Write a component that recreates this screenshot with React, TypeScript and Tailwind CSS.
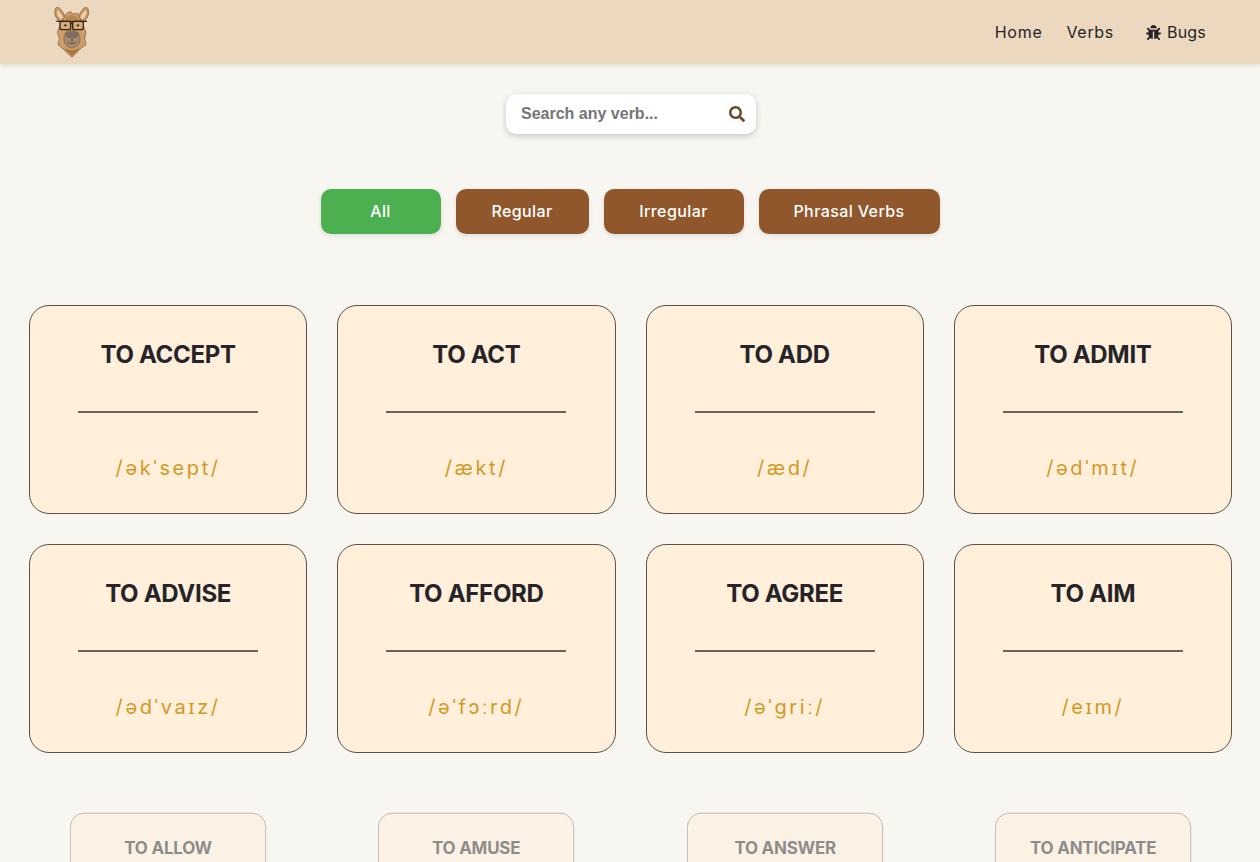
import React from 'react';
import { FaBug, FaSearch } from 'react-icons/fa';

const filters = [
  { label: 'All', width: 'w-[120px]', color: 'bg-[#4caf50]' },
  { label: 'Regular', width: 'w-[133px]', color: 'bg-[#8f572b]' },
  { label: 'Irregular', width: 'w-[140px]', color: 'bg-[#8f572b]' },
  { label: 'Phrasal Verbs', width: 'w-[181px]', color: 'bg-[#8f572b]' },
];

const verbs = [
  { name: 'TO ACCEPT', ipa: '/əkˈsept/' },
  { name: 'TO ACT', ipa: '/ækt/' },
  { name: 'TO ADD', ipa: '/æd/' },
  { name: 'TO ADMIT', ipa: '/ədˈmɪt/' },
  { name: 'TO ADVISE', ipa: '/ədˈvaɪz/' },
  { name: 'TO AFFORD', ipa: '/əˈfɔːrd/' },
  { name: 'TO AGREE', ipa: '/əˈgriː/' },
  { name: 'TO AIM', ipa: '/eɪm/' },
];

const fadedVerbs = [
  { name: 'TO ALLOW', ipa: '/əˈlaʊ/' },
  { name: 'TO AMUSE', ipa: '/əˈmjuːz/' },
  { name: 'TO ANSWER', ipa: '/ˈænsər/' },
  { name: 'TO ANTICIPATE', ipa: '/ænˈtɪsɪpeɪt/' },
];

function Logo() {
  return (
    <svg viewBox="69 18 111 156" className="w-[37px] h-[52px]">
      {/* ears */}
      <path d="M96 66 C80 62 70 44 76 26 C78 20 88 22 92 28 C100 38 106 48 106 58 Z" fill="#c9985f" stroke="#7a5a40" strokeWidth="2" />
      <path d="M92 58 C84 50 79 40 82 30 C90 36 97 46 99 54 Z" fill="#edd2b4" />
      <path d="M154 66 C170 62 180 44 174 26 C172 20 162 22 158 28 C150 38 144 48 144 58 Z" fill="#c9985f" stroke="#7a5a40" strokeWidth="2" />
      <path d="M158 58 C166 50 171 40 168 30 C160 36 153 46 151 54 Z" fill="#edd2b4" />
      {/* head and fur */}
      <path d="M98 60 L110 40 L122 34 L128 42 L142 40 L152 60 L168 96 L164 116 L168 134 L152 146 L126 172 L100 148 L84 134 L88 116 L82 96 Z" fill="#cf9d66" stroke="#7a5a40" strokeWidth="2" strokeLinejoin="round" />
      <path d="M102 144 L126 152 L150 144 L126 168 Z" fill="#a8743f" />
      <path d="M110 50 L124 44 L140 50 L146 60 L104 60 Z" fill="#b98650" />
      {/* muzzle */}
      <path d="M104 104 C104 88 146 88 148 104 C154 122 148 142 126 144 C104 142 98 122 104 104 Z" fill="#a58a70" stroke="#6b5240" strokeWidth="1.5" />
      <path d="M106 100 C110 92 142 92 146 100 C148 110 136 116 126 116 C116 116 104 110 106 100 Z" fill="#7f6a5c" />
      <path d="M126 116 L126 126 M114 126 C120 132 132 132 138 126" stroke="#55433a" strokeWidth="2.5" fill="none" />
      {/* glasses */}
      <path d="M79 64 L171 64" stroke="#2f2622" strokeWidth="4" />
      <rect x="90" y="64" width="32" height="25" rx="6" fill="#d8aa76" stroke="#2f2622" strokeWidth="4" />
      <rect x="128" y="64" width="32" height="25" rx="6" fill="#d8aa76" stroke="#2f2622" strokeWidth="4" />
      <path d="M122 70 L128 70" stroke="#2f2622" strokeWidth="4" />
      <circle cx="106" cy="76" r="3.5" fill="#4a3424" />
      <circle cx="144" cy="76" r="3.5" fill="#4a3424" />
    </svg>
  );
}

function VerbCard({ name, ipa, faded }: { name: string; ipa: string; faded?: boolean }) {
  return (
    <div
      className={`flex flex-col items-center rounded-[20px] border border-[#5c5147] bg-[#ffefdb] pt-[30px] pb-[30px] ${
        faded ? '-translate-y-px scale-[0.705] opacity-50' : ''
      }`}
    >
      <h2 className="mb-[37px] text-2xl leading-[38px] font-bold tracking-[-0.3px] text-[#262428]">{name}</h2>
      <div className="h-0.5 w-[180px] bg-[#6b625c]" />
      <p className="mt-10 text-xl leading-[30px] tracking-[2.6px] text-[#d4991f]">{ipa}</p>
    </div>
  );
}

export default function App() {
  return (
    <div className="h-screen overflow-hidden bg-[#f8f6f1] font-['Inter','Noto_Sans',sans-serif]">
      <header className="relative flex h-16 items-center justify-between bg-[#ebd8bf] pr-[54px] pl-[53px] shadow-[0_2px_5px_rgba(0,0,0,0.1)]">
        <Logo />
        <nav className="flex items-center text-base text-[#262428]">
          <a className="mr-6 tracking-[0.7px]">Home</a>
          <a className="mr-8 tracking-[0.7px]">Verbs</a>
          <a className="flex items-center gap-1.5 tracking-[0.2px]">
            <FaBug className="text-[15px]" />
            Bugs
          </a>
        </nav>
      </header>

      <main>
        <div className="mt-[30px] flex justify-center pl-0.5">
          <div className="flex h-10 w-[250px] items-center rounded-[10px] bg-white pr-[11px] pl-[15px] shadow-[0_2px_6px_rgba(0,0,0,0.2)]">
            <input
              placeholder="Search any verb..."
              className="min-w-0 flex-1 bg-transparent font-['Liberation_Sans',sans-serif] text-base font-bold outline-none placeholder:text-[#757575]"
            />
            <FaSearch className="text-base text-[#6f4a2b]" />
          </div>
        </div>

        <div className="mt-[55px] flex justify-center gap-[15px]">
          {filters.map((f) => (
            <button
              key={f.label}
              className={`h-[45px] rounded-[10px] pb-0.5 text-base font-medium tracking-[0.4px] text-white shadow-[0_2px_5px_rgba(0,0,0,0.1)] ${f.width} ${f.color}`}
            >
              {f.label}
            </button>
          ))}
        </div>

        <div className="mt-[71px] grid grid-cols-4 gap-[30px] pr-[28px] pl-[29px]">
          {verbs.map((v) => (
            <VerbCard key={v.name} name={v.name} ipa={v.ipa} />
          ))}
          {fadedVerbs.map((v) => (
            <VerbCard key={v.name} name={v.name} ipa={v.ipa} faded />
          ))}
        </div>
      </main>
    </div>
  );
}
